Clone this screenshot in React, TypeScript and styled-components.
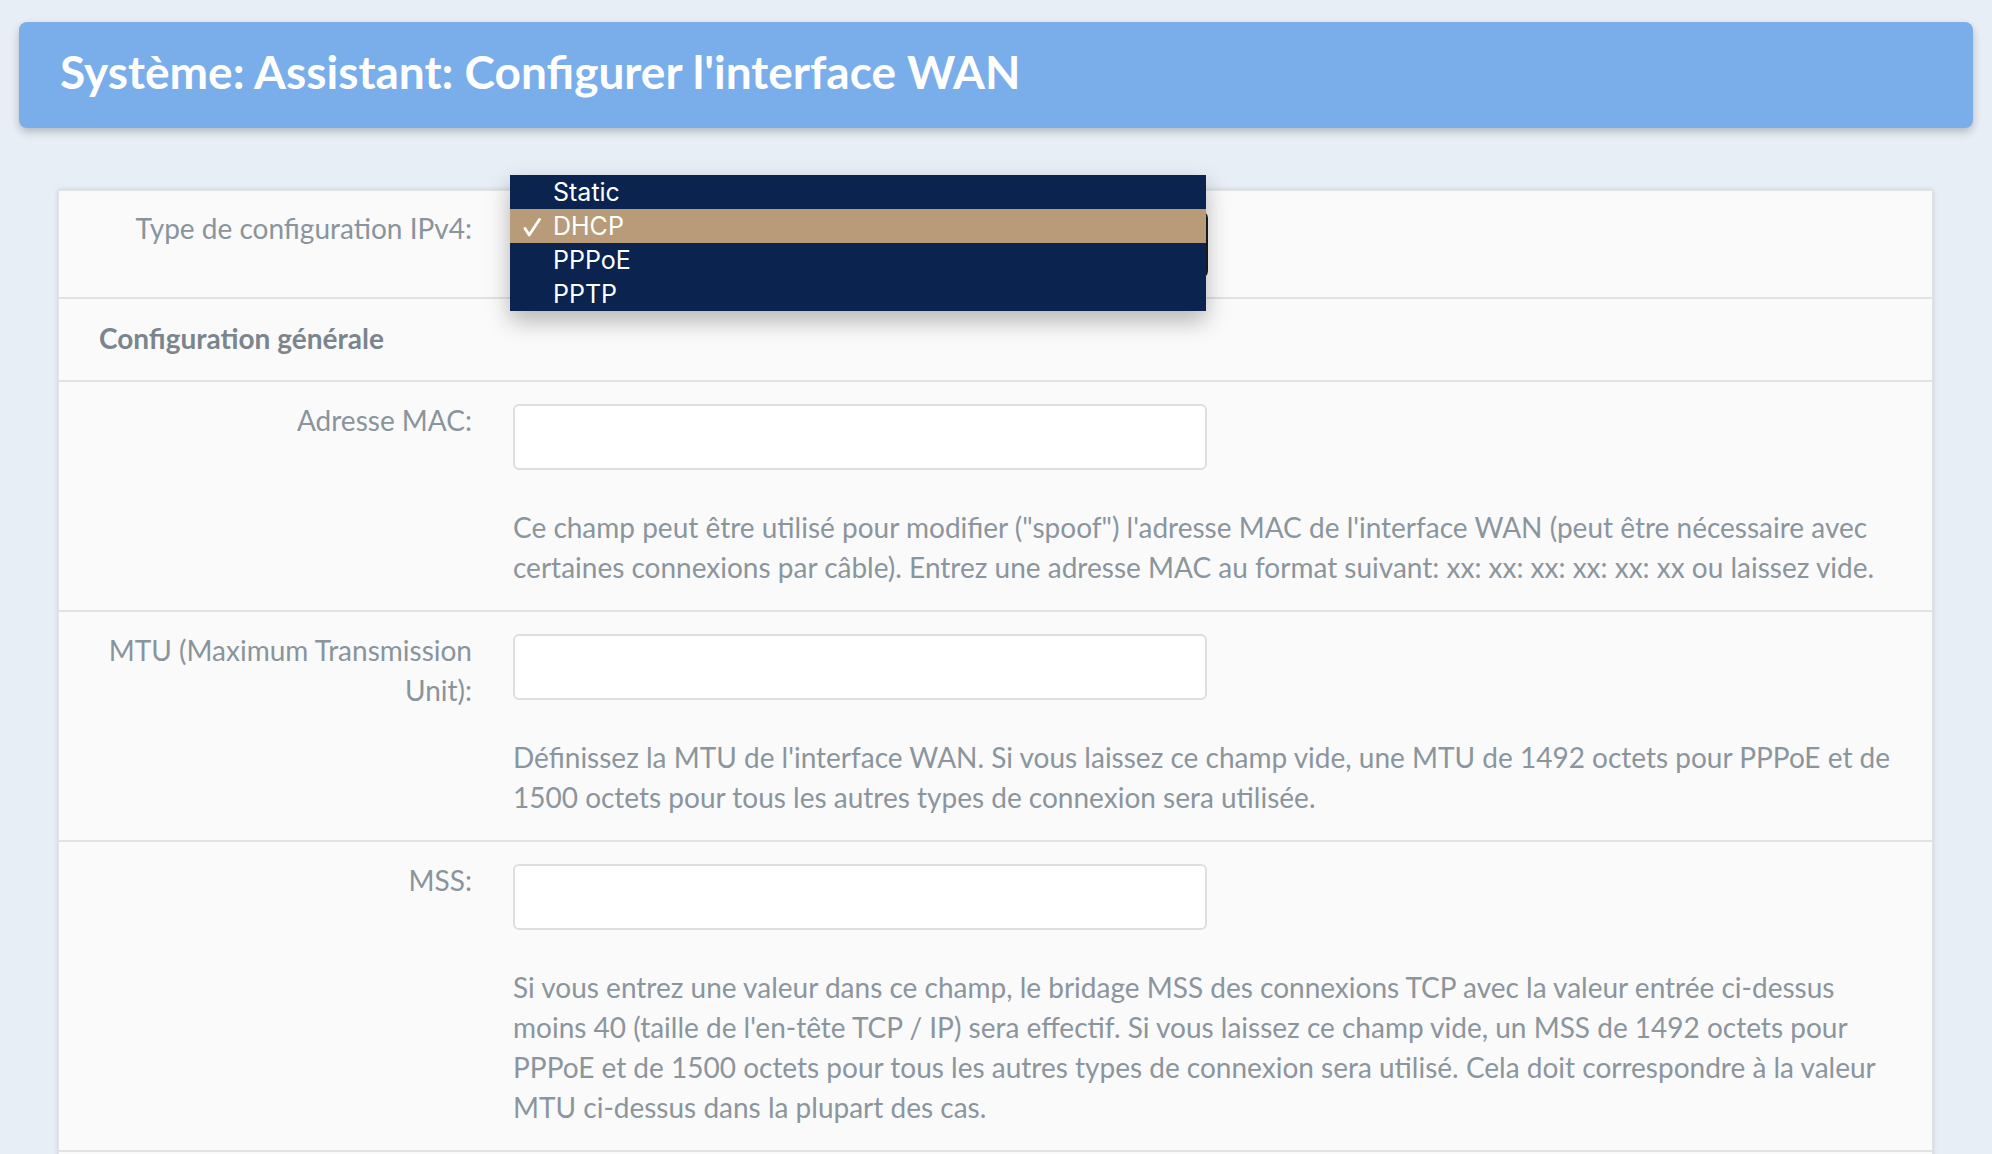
import React from "react";
import styled, { createGlobalStyle } from "styled-components";

const GlobalStyle = createGlobalStyle`
  html, body {
    margin: 0;
    padding: 0;
    overflow: hidden;
    background: #e8eef6;
    font-family: Lato, "Open Sans", sans-serif;
  }
  * { box-sizing: border-box; }
`;

const Page = styled.div`
  padding: 22px 19px 0 19px;
`;

const Header = styled.header`
  height: 106px;
  background: #7aaeea;
  border-radius: 8px;
  box-shadow: 0 4px 8px rgba(0, 0, 0, 0.22);
  display: flex;
  align-items: center;
  padding: 0 0 6px 41px;
`;

const Title = styled.h1`
  margin: 0;
  font-family: Lato, sans-serif;
  font-weight: 700;
  font-size: 46px;
  line-height: 1.2;
  color: #ffffff;
`;

const Card = styled.section`
  margin: 62px 40px 0 39px;
  background: #fafafa;
  border: 1px solid #e2e2e2;
  box-shadow: 0 0 5px rgba(0, 0, 0, 0.14);
  padding-bottom: 60px;
`;

const Row = styled.div<{ $top?: number; $bottom?: number }>`
  display: grid;
  grid-template-columns: 431px 1fr;
  border-bottom: 2px solid #e2e2e2;
  padding-top: ${(p) => p.$top ?? 22}px;
  padding-bottom: ${(p) => p.$bottom ?? 23}px;
`;

const Label = styled.div<{ $offset?: number }>`
  padding: 0 18px 0 40px;
  margin-top: ${(p) => p.$offset ?? -4}px;
  text-align: right;
  font-size: 28px;
  line-height: 40px;
  color: #89949c;
`;

const Value = styled.div`
  padding: 0 28px 0 23px;
`;

const SectionRow = styled.div`
  border-bottom: 2px solid #e2e2e2;
  padding: 19px 40px 22px 40px;
`;

const SectionTitle = styled.h2`
  margin: 0;
  font-size: 28px;
  line-height: 40px;
  font-weight: 700;
  color: #7b858d;
`;

const TextInput = styled.input`
  display: block;
  width: 694px;
  height: 66px;
  margin: 0;
  border: 2px solid #dedede;
  border-radius: 6px;
  background: #ffffff;
  font-family: Lato, sans-serif;
  font-size: 28px;
  padding: 0 16px;
  outline: none;
`;

const Help = styled.p`
  margin: 37px 0 0 0;
  font-size: 28px;
  line-height: 40px;
  color: #8b959d;
`;

const SelectWrap = styled.div`
  position: relative;
  width: 695px;
  height: 67px;
`;

const SelectBox = styled.div`
  width: 100%;
  height: 100%;
  border: 2px solid #1d1d1f;
  border-radius: 7px;
  background: #ffffff;
`;

const Menu = styled.ul`
  position: absolute;
  left: -3px;
  top: -36px;
  width: 696px;
  margin: 0;
  padding: 0;
  list-style: none;
  background: #0a244f;
  box-shadow: 0 10px 22px rgba(0, 0, 0, 0.28);
  z-index: 10;
`;

const MenuItem = styled.li<{ $selected?: boolean }>`
  display: flex;
  align-items: center;
  height: 34px;
  padding-left: 13px;
  background: ${(p) => (p.$selected ? "#b89c79" : "transparent")};
  color: #ffffff;
  font-family: Inter, "Liberation Sans", sans-serif;
  font-size: 25px;
  line-height: 34px;
`;

const Check = styled.span`
  display: inline-flex;
  align-items: center;
  width: 30px;
  height: 34px;
  padding-top: 3px;
`;

const CheckMark = () => (
  <svg width="18" height="19" viewBox="0 0 18 19" aria-hidden="true">
    <path
      d="M2 10.5 L6.2 17 L16.5 1.5"
      fill="none"
      stroke="#ffffff"
      strokeWidth="2.8"
      strokeLinecap="round"
      strokeLinejoin="round"
    />
  </svg>
);

const options = ["Static", "DHCP", "PPPoE", "PPTP"];

export default function App() {
  return (
    <>
      <GlobalStyle />
      <Page>
        <Header>
          <Title>Système: Assistant: Configurer l'interface WAN</Title>
        </Header>
        <Card>
          <Row $top={20} $bottom={19}>
            <Label $offset={-3}>Type de configuration IPv4:</Label>
            <Value>
              <SelectWrap>
                <SelectBox />
                <Menu>
                  {options.map((o) => (
                    <MenuItem key={o} $selected={o === "DHCP"}>
                      <Check>{o === "DHCP" ? <CheckMark /> : null}</Check>
                      {o}
                    </MenuItem>
                  ))}
                </Menu>
              </SelectWrap>
            </Value>
          </Row>
          <SectionRow>
            <SectionTitle>Configuration générale</SectionTitle>
          </SectionRow>
          <Row>
            <Label>Adresse MAC:</Label>
            <Value>
              <TextInput type="text" />
              <Help>
                Ce champ peut être utilisé pour modifier ("spoof") l'adresse MAC de
                l'interface WAN (peut être nécessaire avec certaines connexions par
                câble). Entrez une adresse MAC au format suivant: xx: xx: xx: xx: xx: xx
                ou laissez vide.
              </Help>
            </Value>
          </Row>
          <Row>
            <Label>MTU (Maximum Transmission Unit):</Label>
            <Value>
              <TextInput type="text" />
              <Help>
                Définissez la MTU de l'interface WAN. Si vous laissez ce champ vide,
                une MTU de 1492 octets pour PPPoE et de 1500 octets pour tous les
                autres types de connexion sera utilisée.
              </Help>
            </Value>
          </Row>
          <Row>
            <Label>MSS:</Label>
            <Value>
              <TextInput type="text" />
              <Help>
                Si vous entrez une valeur dans ce champ, le bridage MSS des connexions
                TCP avec la valeur entrée ci-dessus moins 40 (taille de l'en-tête TCP
                / IP) sera effectif. Si vous laissez ce champ vide, un MSS de 1492
                octets pour PPPoE et de 1500 octets pour tous les autres types de
                connexion sera utilisé. Cela doit correspondre à la valeur MTU
                ci-dessus dans la plupart des cas.
              </Help>
            </Value>
          </Row>
        </Card>
      </Page>
    </>
  );
}
